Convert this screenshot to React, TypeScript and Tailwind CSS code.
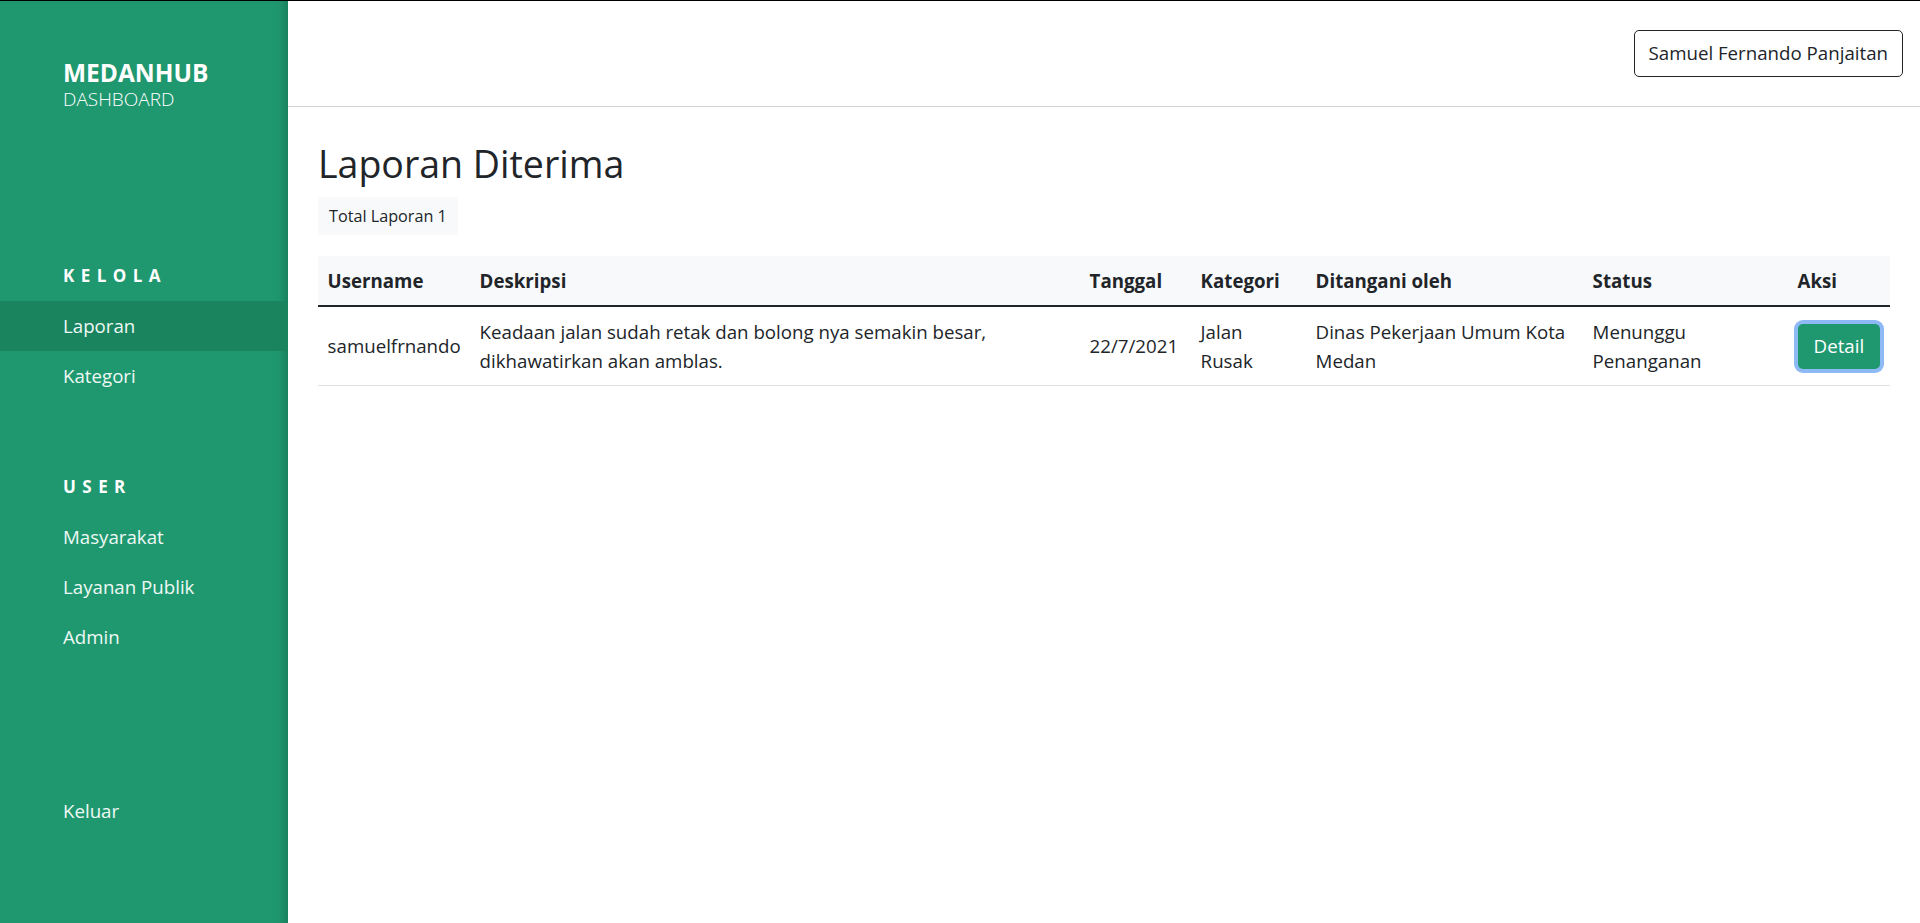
import React from 'react'

const kelola = [
    { label: 'Laporan', active: true },
    { label: 'Kategori', active: false },
]

const users = ['Masyarakat', 'Layanan Publik', 'Admin']

const columns = [
    { label: 'Username', w: 'w-[152px]' },
    { label: 'Deskripsi', w: 'w-[610px]' },
    { label: 'Tanggal', w: 'w-[111px]' },
    { label: 'Kategori', w: 'w-[115px]' },
    { label: 'Ditangani oleh', w: 'w-[277px]' },
    { label: 'Status', w: 'w-[205px]' },
    { label: 'Aksi', w: 'w-[102px]' },
]

const laporan = [
    {
        username: 'samuelfrnando',
        deskripsi: 'Keadaan jalan sudah retak dan bolong nya semakin besar, dikhawatirkan akan amblas.',
        tanggal: '22/7/2021',
        kategori: 'Jalan Rusak',
        instansi: 'Dinas Pekerjaan Umum Kota Medan',
        status: 'Menunggu Penanganan',
    },
]

const NavItem = ({ label, active }: { label: string, active?: boolean }) => (
    <div className={`h-[50px] flex items-center pl-[63px] text-[18.7px] text-[#eef8f4] ${active ? 'bg-[#1a845f]' : ''}`}>
        {label}
    </div>
)

const Sidebar = () => (
    <aside className="w-[288px] shrink-0 flex flex-col bg-[#1f9870] text-white shadow-[inset_-10px_0_10px_-6px_rgba(0,0,0,0.18)]">
        <div className="pt-[57px] pl-[63px]">
            <div className="text-[24.5px] font-bold leading-[29px]">MEDANHUB</div>
            <div className="text-[19px] font-light leading-[24px]">DASHBOARD</div>
        </div>

        <div className="mt-[140px] h-[50px] flex items-center pl-[63px] text-[17px] font-bold tracking-[0.38em]">KELOLA</div>
        {kelola.map(item => <NavItem key={item.label} label={item.label} active={item.active} />)}

        <div className="mt-[61px] h-[50px] flex items-center pl-[63px] text-[17px] font-bold tracking-[0.38em]">USER</div>
        {users.map(u => <NavItem key={u} label={u} />)}

        <div className="mt-[124px]">
            <NavItem label="Keluar" />
        </div>
    </aside>
)

export default function App() {
    return (
        <div className="flex h-[923px] border-t border-black bg-white text-[#212529] font-['Open_Sans',sans-serif] overflow-hidden">
            <Sidebar />
            <main className="flex-1 flex flex-col">
                <header className="h-[106px] shrink-0 flex items-center justify-end pr-[17px] border-b border-[#d4d4d4]">
                    <button className="h-[47px] px-[14px] border border-[#212529] rounded-[5px] text-[18.7px]">
                        Samuel Fernando Panjaitan
                    </button>
                </header>

                <section className="px-[30px] pt-[33px]">
                    <h2 className="text-[37.5px] leading-[48px]">Laporan Diterima</h2>
                    <div className="mt-[9px] inline-flex items-center h-[38px] px-[11px] bg-[#f8f9fa] rounded-[4px] text-[16.2px]">
                        Total Laporan 1
                    </div>

                    <table className="mt-[21px] w-full table-fixed text-[18.7px] leading-[29.4px]">
                        <thead>
                            <tr className="bg-[#f8f9fa] border-b-2 border-[#212529]">
                                {columns.map(c => (
                                    <th key={c.label} className={`${c.w} px-[9.6px] py-[9.6px] text-left font-bold`}>{c.label}</th>
                                ))}
                            </tr>
                        </thead>
                        <tbody>
                            {laporan.map(l => (
                                <tr key={l.username} className="border-b border-[#dee2e6]">
                                    <td className="px-[9.6px] py-[10px] align-middle">{l.username}</td>
                                    <td className="px-[9.6px] py-[10px] align-middle">{l.deskripsi}</td>
                                    <td className="px-[9.6px] py-[10px] align-middle">{l.tanggal}</td>
                                    <td className="px-[9.6px] py-[10px] align-middle">
                                        <span className="block max-w-[80px]">{l.kategori}</span>
                                    </td>
                                    <td className="px-[9.6px] py-[10px] align-middle">{l.instansi}</td>
                                    <td className="px-[9.6px] py-[10px] align-middle">{l.status}</td>
                                    <td className="px-[9.6px] py-[10px] align-middle">
                                        <button className="h-[45px] px-[16px] rounded-[5px] bg-[#1f9870] text-white text-[18.7px] ring-4 ring-[#8db9f5]">
                                            Detail
                                        </button>
                                    </td>
                                </tr>
                            ))}
                        </tbody>
                    </table>
                </section>
            </main>
        </div>
    )
}
